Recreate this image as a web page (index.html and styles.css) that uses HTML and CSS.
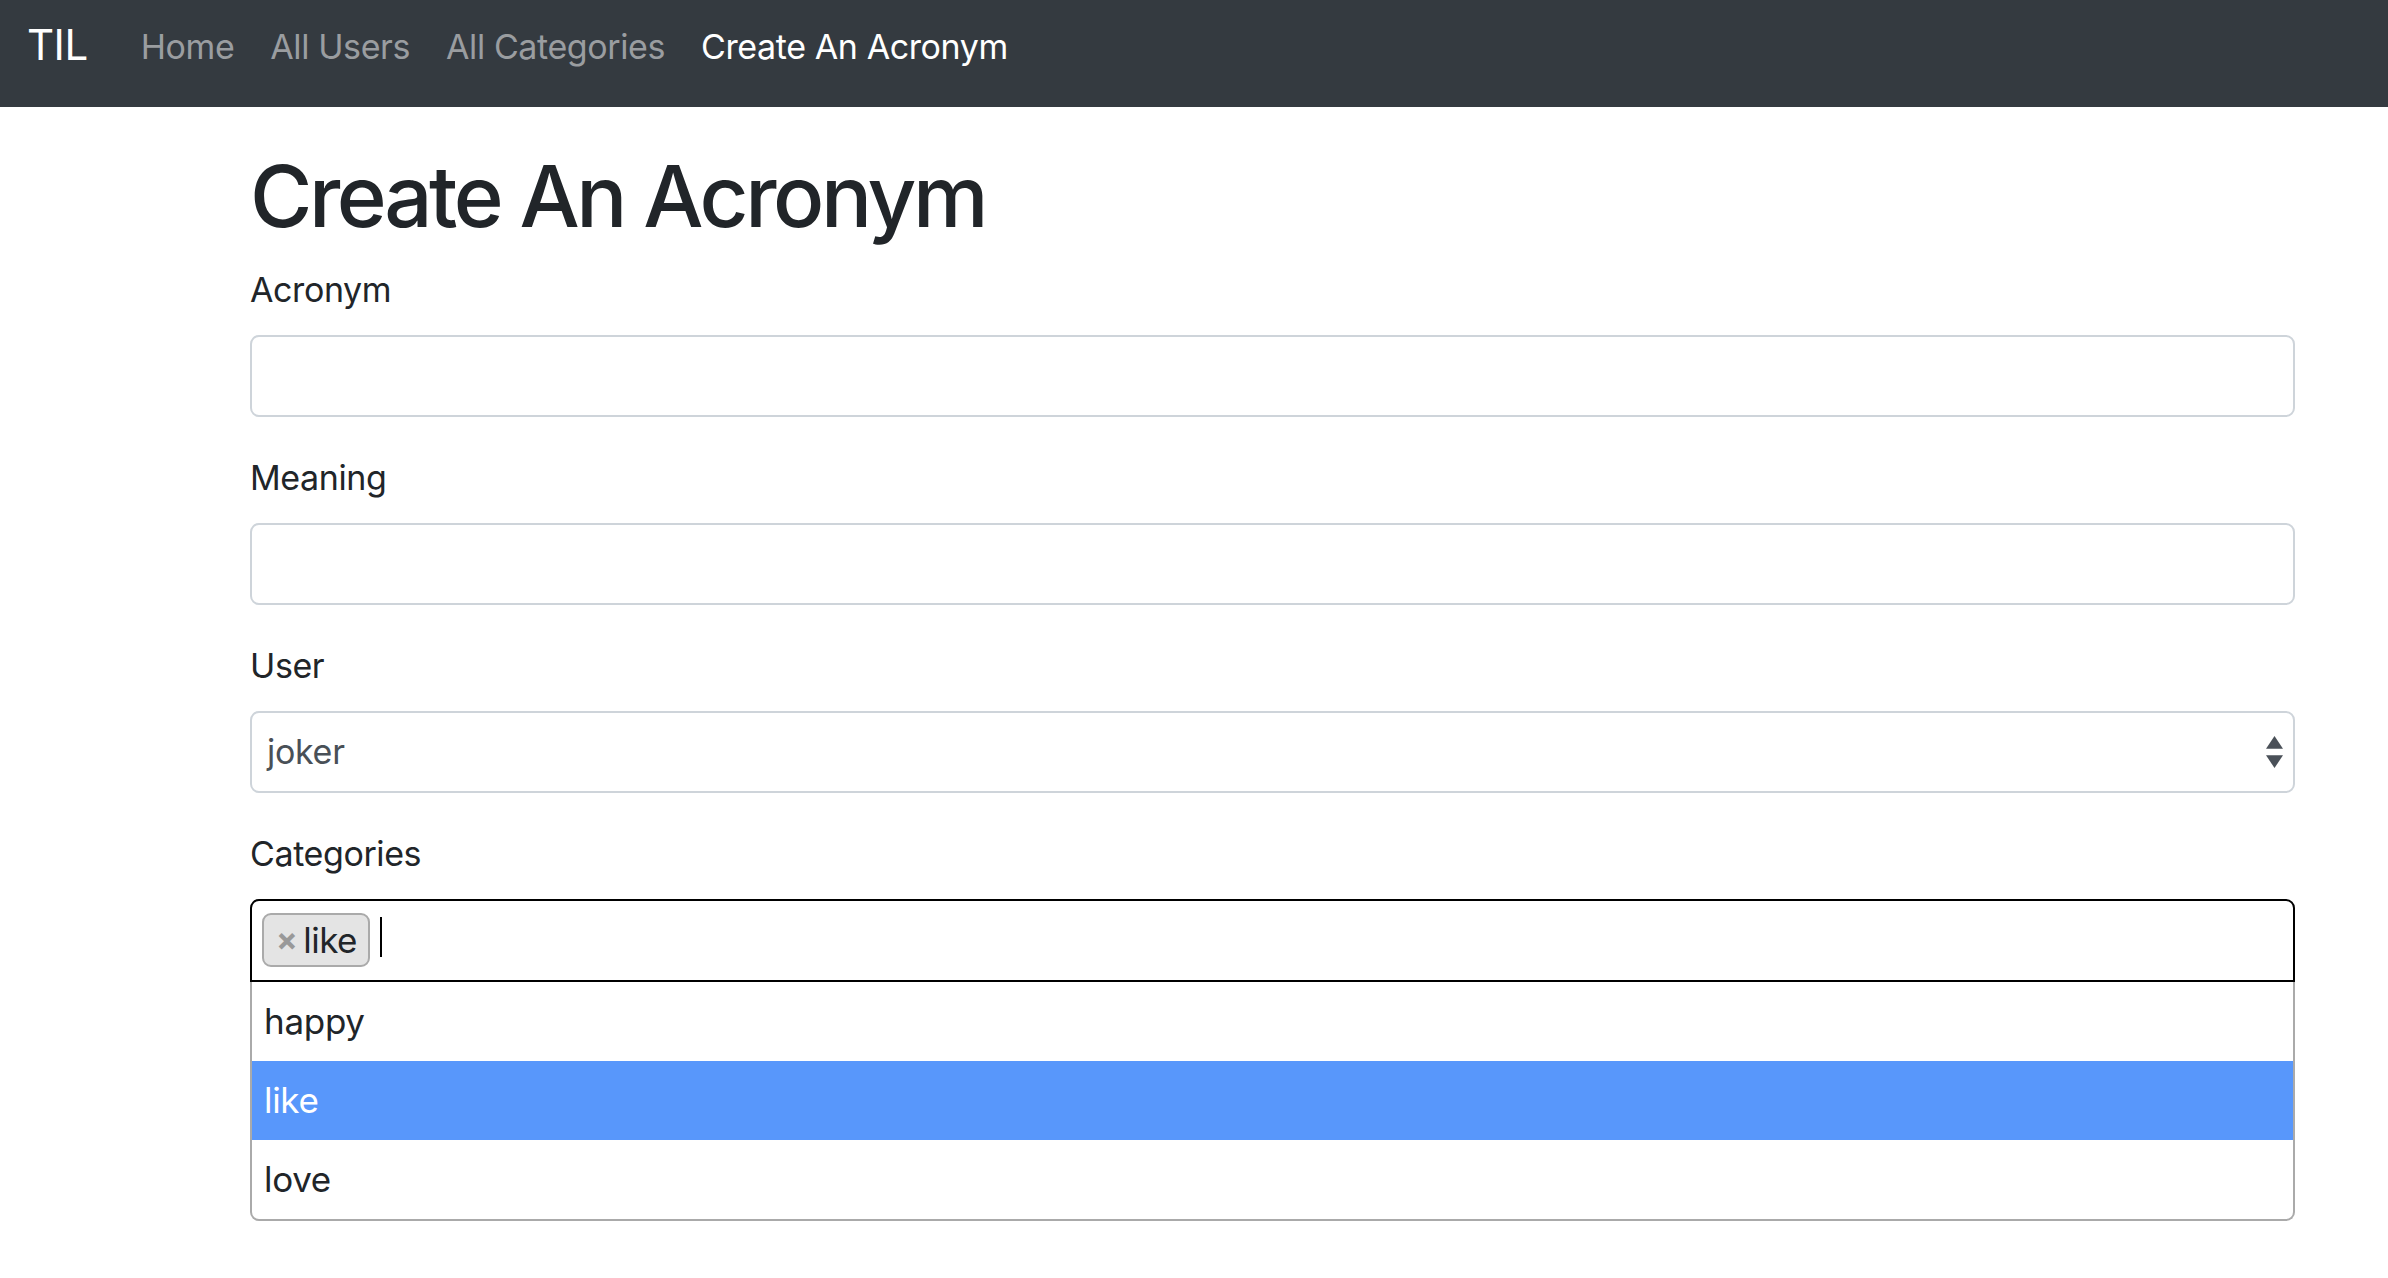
FILE: index.html
```html
<!DOCTYPE html>
<html lang="en">
<head>
<meta charset="utf-8">
<title>Create An Acronym | TIL</title>
<link rel="stylesheet" href="styles.css">
</head>
<body>
<nav class="navbar">
  <a class="brand" href="#">TIL</a>
  <ul class="nav-links">
    <li><a class="nav-link" href="#">Home</a></li>
    <li><a class="nav-link" href="#">All Users</a></li>
    <li><a class="nav-link" href="#">All Categories</a></li>
    <li><a class="nav-link active" href="#">Create An Acronym</a></li>
  </ul>
</nav>
<main class="container">
  <h1 class="title">Create An Acronym</h1>
  <form class="form">
    <div class="form-group">
      <label class="label" for="short">Acronym</label>
      <input class="form-control" type="text" id="short">
    </div>
    <div class="form-group">
      <label class="label" for="long">Meaning</label>
      <input class="form-control" type="text" id="long">
    </div>
    <div class="form-group">
      <label class="label">User</label>
      <div class="form-control select">
        <span class="select-value">joker</span>
        <svg class="select-arrows" width="17" height="32" viewBox="0 0 17 32" aria-hidden="true">
          <polygon points="0,12.7 8.5,0 17,12.7" fill="#4a5058"/>
          <polygon points="0,19.3 17,19.3 8.5,32" fill="#4a5058"/>
        </svg>
      </div>
    </div>
    <div class="form-group">
      <label class="label">Categories</label>
      <div class="tags-box">
        <span class="tag"><span class="tag-remove">×</span>like</span>
        <span class="caret"></span>
      </div>
      <ul class="dropdown">
        <li class="option">happy</li>
        <li class="option highlighted">like</li>
        <li class="option">love</li>
      </ul>
    </div>
  </form>
</main>
</body>
</html>
```
FILE: styles.css
```css
* {
  box-sizing: border-box;
}

body {
  margin: 0;
  font-family: Inter, "Noto Sans", sans-serif;
  color: #212529;
  background: #fff;
}

.navbar {
  height: 107px;
  background: #343a40;
  display: flex;
  align-items: flex-start;
  padding: 23px 0 0 27px;
}

.brand {
  font-size: 42px;
  line-height: 44px;
  color: #fff;
  text-decoration: none;
  margin-right: 35px;
  letter-spacing: -0.5px;
}

.nav-links {
  display: flex;
  list-style: none;
  margin: 7px 0 0;
  padding: 0;
}

.nav-link {
  display: block;
  font-size: 34px;
  line-height: 34px;
  padding: 0 18px;
  color: #9a9da0;
  text-decoration: none;
  letter-spacing: -0.4px;
}

.nav-link.active {
  color: #fff;
}

.container {
  width: 2045px;
  margin-left: 250px;
}

.title {
  font-size: 85px;
  line-height: 102px;
  font-weight: 500;
  margin: 39px 0 16px;
  letter-spacing: -3.4px;
}

.form {
  margin: 0;
}

.form-group {
  margin-bottom: 35px;
}

.label {
  display: block;
  font-size: 34px;
  line-height: 51px;
  margin-bottom: 20px;
  letter-spacing: -0.4px;
}

.form-control {
  display: block;
  width: 100%;
  height: 82px;
  margin: 0;
  border: 2px solid #ced4da;
  border-radius: 9px;
  background: #fff;
  font-family: inherit;
  font-size: 34px;
  padding: 0 24px;
  color: #495057;
  outline: none;
}

.select {
  display: flex;
  align-items: center;
  justify-content: space-between;
  padding: 0 10px 0 15px;
}

.select-value {
  line-height: 1;
  letter-spacing: -0.3px;
}

.tags-box {
  display: flex;
  align-items: flex-start;
  height: 83px;
  border: 2px solid #000;
  border-radius: 9px 9px 0 0;
  padding: 12px 10px 0 10px;
}

.tag {
  height: 54px;
  display: flex;
  align-items: center;
  padding: 0 11px 0 12px;
  background: #e4e4e4;
  border: 2px solid #aaa;
  border-radius: 9px;
  font-size: 35px;
  line-height: 1;
  color: #212529;
  letter-spacing: -0.5px;
}

.tag-remove {
  color: #999;
  font-weight: 700;
  font-size: 32px;
  margin-right: 6px;
}

.caret {
  width: 2px;
  height: 40px;
  background: #000;
  margin: 4px 0 0 10px;
}

.dropdown {
  list-style: none;
  margin: 0;
  padding: 0;
  border: 2px solid #aaa;
  border-top: 0;
  border-radius: 0 0 9px 9px;
  overflow: hidden;
}

.option {
  height: 79px;
  line-height: 79px;
  padding: 0 12px;
  font-size: 35px;
  color: #212529;
  letter-spacing: -0.3px;
}

.option.highlighted {
  background: #5897fb;
  color: #fff;
}
```
